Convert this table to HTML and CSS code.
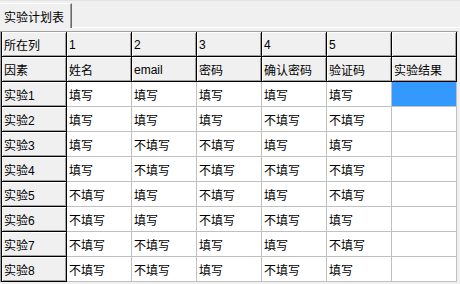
FILE: index.html
```html
<!DOCTYPE html>
<html lang="zh">
<head>
    <meta charset="UTF-8">
    <title>实验计划表</title>
    <link rel="stylesheet" href="styles.css">
</head>
<body>
<div class="form">
    <div class="tabs">
        <div class="tab">实验计划表</div>
        <div class="tab-rest"></div>
    </div>
    <div class="panel">
        <div class="grid">
            <div class="fix">所在列</div><div class="fix">1</div><div class="fix">2</div><div class="fix">3</div><div class="fix">4</div><div class="fix">5</div><div class="fix"></div>
            <div class="fix">因素</div><div class="fix">姓名</div><div class="fix">email</div><div class="fix">密码</div><div class="fix">确认密码</div><div class="fix">验证码</div><div class="fix">实验结果</div>

            <div class="fix">实验1</div><div class="cell">填写</div><div class="cell">填写</div><div class="cell">填写</div><div class="cell">填写</div><div class="cell">填写</div><div class="cell sel"></div>
            <div class="fix">实验2</div><div class="cell">填写</div><div class="cell">填写</div><div class="cell">填写</div><div class="cell">不填写</div><div class="cell">不填写</div><div class="cell"></div>
            <div class="fix">实验3</div><div class="cell">填写</div><div class="cell">不填写</div><div class="cell">不填写</div><div class="cell">填写</div><div class="cell">填写</div><div class="cell"></div>
            <div class="fix">实验4</div><div class="cell">填写</div><div class="cell">不填写</div><div class="cell">不填写</div><div class="cell">不填写</div><div class="cell">不填写</div><div class="cell"></div>
            <div class="fix">实验5</div><div class="cell">不填写</div><div class="cell">填写</div><div class="cell">不填写</div><div class="cell">填写</div><div class="cell">不填写</div><div class="cell"></div>
            <div class="fix">实验6</div><div class="cell">不填写</div><div class="cell">填写</div><div class="cell">不填写</div><div class="cell">不填写</div><div class="cell">填写</div><div class="cell"></div>
            <div class="fix">实验7</div><div class="cell">不填写</div><div class="cell">不填写</div><div class="cell">填写</div><div class="cell">填写</div><div class="cell">不填写</div><div class="cell"></div>
            <div class="fix">实验8</div><div class="cell">不填写</div><div class="cell">不填写</div><div class="cell">填写</div><div class="cell">不填写</div><div class="cell">填写</div><div class="cell"></div>
        </div>
    </div>
</div>
</body>
</html>
```

FILE: styles.css
```css
* {
    margin: 0;
    padding: 0;
    box-sizing: border-box;
}
body {
    width: 460px;
    height: 284px;
    overflow: hidden;
    background: #f0f0f0;
    font-family: "Liberation Sans", "Noto Sans CJK SC", sans-serif;
    font-size: 12px;
    color: #000;
}
.form {
    border-top: 1px solid #e3e3e3;
    padding-top: 2px;
}
/* tab strip */
.tabs {
    display: flex;
    height: 25px;
}
.tab {
    width: 72px;
    padding: 4px 0 0 4px;
    font-size: 12px;
    border-top: 1px solid #fff;
    border-right: 1px solid #696969;
    box-shadow: inset -1px 0 0 #a0a0a0;
}
.tab-rest {
    flex: 1;
    border-bottom: 1px solid #fff;
}
.panel {
    padding: 3px 0 0 0;
}
/* flex grid */
.grid {
    display: grid;
    grid-template-columns: 66px repeat(6, 65px);
    grid-auto-rows: 25px;
    width: 458px;
    border-left: 1px solid #a0a0a0;
    border-top: 1px solid #a0a0a0;
    box-shadow: inset 1px 0 0 #000;
}
.grid > div {
    display: flex;
    align-items: center;
    padding-left: 2px;
    padding-top: 1px;
    white-space: nowrap;
    overflow: hidden;
}
.fix {
    background: #f0f0f0;
    border-right: 1px solid #000;
    border-bottom: 1px solid #000;
    box-shadow: inset 1px 1px 0 #fff, inset -1px -1px 0 #a0a0a0;
}
.grid > .fix:nth-child(7n+1) {
    border-left: 1px solid #000;
}
.cell {
    background: #fff;
    border-right: 1px solid #c0c0c0;
    border-bottom: 1px solid #c0c0c0;
}
.cell.sel {
    background: #3399ff;
}
```
